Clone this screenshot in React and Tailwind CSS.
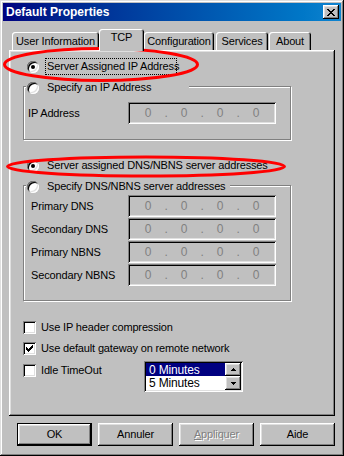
import React from "react";

const RAISED =
  "shadow-[inset_-1px_-1px_#000,inset_1px_1px_#fff,inset_-2px_-2px_#808080,inset_2px_2px_#dfdfdf]";
const SUNKEN =
  "shadow-[inset_1px_1px_#808080,inset_-1px_-1px_#fff,inset_2px_2px_#000,inset_-2px_-2px_#dfdfdf]";

function Radio({ checked }) {
  return (
    <span
      className={`relative w-[12px] h-[12px] rounded-full bg-white ${SUNKEN} flex items-center justify-center shrink-0`}
    >
      {checked && <span className="w-[4px] h-[4px] rounded-full bg-black" />}
    </span>
  );
}

function Checkbox({ checked }) {
  return (
    <span className={`relative w-[13px] h-[13px] bg-white ${SUNKEN} shrink-0`}>
      {checked && (
        <svg
          className="absolute left-[3px] top-[3px]"
          width="7"
          height="7"
          viewBox="0 0 7 7"
          shapeRendering="crispEdges"
        >
          <rect x="6" y="0" width="1" height="3" fill="#000" />
          <rect x="5" y="1" width="1" height="3" fill="#000" />
          <rect x="4" y="2" width="1" height="3" fill="#000" />
          <rect x="3" y="3" width="1" height="3" fill="#000" />
          <rect x="2" y="4" width="1" height="3" fill="#000" />
          <rect x="1" y="3" width="1" height="3" fill="#000" />
          <rect x="0" y="2" width="1" height="3" fill="#000" />
        </svg>
      )}
    </span>
  );
}

function IpBox() {
  const seg = "w-[30px] text-center";
  return (
    <div
      className={`w-[148px] h-[22px] bg-[#c0c0c0] ${SUNKEN} flex items-center pl-[5px] text-[#808080] text-[12px]`}
    >
      <span className={seg}>0</span>
      <span className="w-[6px] text-center">.</span>
      <span className={seg}>0</span>
      <span className="w-[6px] text-center">.</span>
      <span className={seg}>0</span>
      <span className="w-[6px] text-center">.</span>
      <span className={seg}>0</span>
    </div>
  );
}

function Tab({ label, w, selected, extra = "" }) {
  if (selected) {
    return (
      <div
        className={`relative z-10 ${w} h-[22px] -mb-[1px] bg-[#c0c0c0] rounded-t-[3px] shadow-[inset_1px_1px_#fff,inset_-1px_0_#000,inset_-2px_0_#808080] flex items-start justify-center pt-[3px] whitespace-nowrap ${extra}`}
      >
        {label}
      </div>
    );
  }
  return (
    <div
      className={`${w} h-[18px] bg-[#c0c0c0] rounded-t-[3px] shadow-[inset_1px_1px_#fff,inset_-1px_0_#000,inset_-2px_0_#808080] flex items-center justify-center pt-[1px] whitespace-nowrap ${extra}`}
    >
      {label}
    </div>
  );
}

function Button({ children, isDefault }) {
  return (
    <div
      className={`w-[75px] h-[23px] bg-[#c0c0c0] ${
        isDefault ? "border border-black" : ""
      } ${RAISED} flex items-center justify-center`}
    >
      {children}
    </div>
  );
}

export default function App() {
  return (
    <div className="relative w-[344px] h-[456px] bg-[#c0c0c0] p-[3px] text-[11px] leading-none tracking-[-0.15px] text-black font-['Liberation_Sans',Arial,sans-serif] shadow-[inset_-1px_-1px_#000,inset_1px_1px_#dfdfdf,inset_-2px_-2px_#808080,inset_2px_2px_#fff] flex flex-col">
      {/* Title bar */}
      <div className="h-[18px] bg-gradient-to-r from-[#000080] to-[#1084d0] flex items-center justify-between pl-[3px] pr-[2px]">
        <span className="text-white font-bold text-[12px] tracking-normal">Default Properties</span>
        <div className={`w-[16px] h-[14px] bg-[#c0c0c0] ${RAISED} flex items-center justify-center`}>
          <svg width="8" height="7" viewBox="0 0 8 7" shapeRendering="crispEdges">
            <rect x="0" y="0" width="2" height="1" fill="#000" />
            <rect x="6" y="0" width="2" height="1" fill="#000" />
            <rect x="1" y="1" width="2" height="1" fill="#000" />
            <rect x="5" y="1" width="2" height="1" fill="#000" />
            <rect x="2" y="2" width="4" height="1" fill="#000" />
            <rect x="3" y="3" width="2" height="1" fill="#000" />
            <rect x="2" y="4" width="4" height="1" fill="#000" />
            <rect x="1" y="5" width="2" height="1" fill="#000" />
            <rect x="5" y="5" width="2" height="1" fill="#000" />
            <rect x="0" y="6" width="2" height="1" fill="#000" />
            <rect x="6" y="6" width="2" height="1" fill="#000" />
          </svg>
        </div>
      </div>

      {/* Tabs */}
      <div className="mt-[8px] h-[21px] flex items-end pl-[9px]">
        <Tab label="User Information" w="w-[87px]" />
        <Tab label="TCP" w="w-[45px]" selected />
        <Tab label="Configuration" w="w-[70px]" />
        <Tab label="Services" w="w-[52px]" extra="ml-[2px]" />
        <Tab label="About" w="w-[42px]" extra="ml-[1px]" />
      </div>

      {/* Panel */}
      <div className={`ml-[6px] w-[326px] h-[366px] ${RAISED} flex flex-col`}>
        {/* Radio 1 */}
        <div className="mt-[8px] ml-[18px] h-[17px] flex items-center">
          <Radio checked />
          <span className="ml-[6px] w-[132px] h-[17px] border border-dotted border-black pl-[1px] flex items-center whitespace-nowrap">
            Server Assigned IP Address
          </span>
        </div>

        {/* Group 1 */}
        <div className="mt-[11px] ml-[14px] w-[268px] h-[54px] border border-[#808080] shadow-[1px_1px_0_#fff,inset_1px_1px_0_#fff] flex flex-col">
          <div className="-mt-[8px] ml-[2px] h-[17px] w-[163px] bg-[#c0c0c0] pl-[1px] flex items-center">
            <Radio />
            <span className="ml-[8px] whitespace-nowrap">Specify an IP Address</span>
          </div>
          <div className="mt-[6px] h-[22px] flex items-center">
            <span className="w-[104px] pl-[4px]">IP Address</span>
            <IpBox />
          </div>
        </div>

        {/* Radio 3 */}
        <div className="mt-[17px] ml-[18px] h-[17px] flex items-center">
          <Radio checked />
          <span className="ml-[8px] whitespace-nowrap">
            Server assigned DNS/NBNS server addresses
          </span>
        </div>

        {/* Group 2 */}
        <div className="mt-[11px] ml-[14px] w-[268px] h-[116px] border border-[#808080] shadow-[1px_1px_0_#fff,inset_1px_1px_0_#fff] flex flex-col">
          <div className="-mt-[8px] ml-[2px] h-[17px] w-[204px] bg-[#c0c0c0] pl-[1px] flex items-center">
            <Radio />
            <span className="ml-[8px] whitespace-nowrap">
              Specify DNS/NBNS server addresses
            </span>
          </div>
          {["Primary DNS", "Secondary DNS", "Primary NBNS", "Secondary NBNS"].map(
            (l, i) => (
              <div
                key={l}
                className={`${i === 0 ? "mt-0" : "mt-[1px]"} h-[22px] flex items-center`}
              >
                <span className="w-[104px] pl-[7px]">{l}</span>
                <IpBox />
              </div>
            )
          )}
        </div>

        {/* Checkboxes */}
        <div className="mt-[18px] ml-[14px] h-[17px] flex items-center">
          <Checkbox />
          <span className="ml-[5px]">Use IP header compression</span>
        </div>
        <div className="mt-[4px] ml-[14px] h-[17px] flex items-center">
          <Checkbox checked />
          <span className="ml-[5px]">Use default gateway on remote network</span>
        </div>
        <div className="mt-[4px] ml-[14px] flex items-start">
          <div className="w-[121px] h-[17px] mt-[1px] flex items-center">
            <Checkbox />
            <span className="ml-[5px]">Idle TimeOut</span>
          </div>
          <div className={`w-[99px] h-[31px] bg-white ${SUNKEN} p-[2px] flex`}>
            <div className="flex-1 flex flex-col text-[12px]">
              <div className="h-[13px] bg-[#000080] text-white pl-[3px] flex items-center">
                0 Minutes
              </div>
              <div className="h-[13px] pl-[3px] flex items-center">5 Minutes</div>
            </div>
            <div className="w-[16px] flex flex-col">
              <div className={`h-[13px] bg-[#c0c0c0] ${RAISED} flex items-center justify-center`}>
                <svg width="7" height="4" viewBox="0 0 7 4" shapeRendering="crispEdges">
                  <rect x="3" y="0" width="1" height="1" fill="#000" />
                  <rect x="2" y="1" width="3" height="1" fill="#000" />
                  <rect x="1" y="2" width="5" height="1" fill="#000" />
                </svg>
              </div>
              <div className={`h-[14px] bg-[#c0c0c0] ${RAISED} flex items-center justify-center`}>
                <svg width="7" height="4" viewBox="0 0 7 4" shapeRendering="crispEdges">
                  <rect x="1" y="1" width="5" height="1" fill="#000" />
                  <rect x="2" y="2" width="3" height="1" fill="#000" />
                  <rect x="3" y="3" width="1" height="1" fill="#000" />
                </svg>
              </div>
            </div>
          </div>
        </div>
      </div>

      {/* Buttons */}
      <div className="mt-[7px] mr-[6px] flex justify-end gap-[6px]">
        <Button isDefault>OK</Button>
        <Button>Annuler</Button>
        <Button>
          <span className="text-[#808080] [text-shadow:1px_1px_0_#fff]">
            <span className="underline">A</span>ppliquer
          </span>
        </Button>
        <Button>Aide</Button>
      </div>

      {/* Red annotation ellipses */}
      <svg
        className="absolute left-0 top-0 pointer-events-none"
        width="344"
        height="456"
        viewBox="0 0 344 456"
      >
        <ellipse cx="101" cy="64.5" rx="96.5" ry="16" fill="none" stroke="#ff0000" strokeWidth="3" />
        <ellipse cx="146" cy="166.5" rx="138.5" ry="9.5" fill="none" stroke="#ff0000" strokeWidth="3" />
      </svg>
    </div>
  );
}
